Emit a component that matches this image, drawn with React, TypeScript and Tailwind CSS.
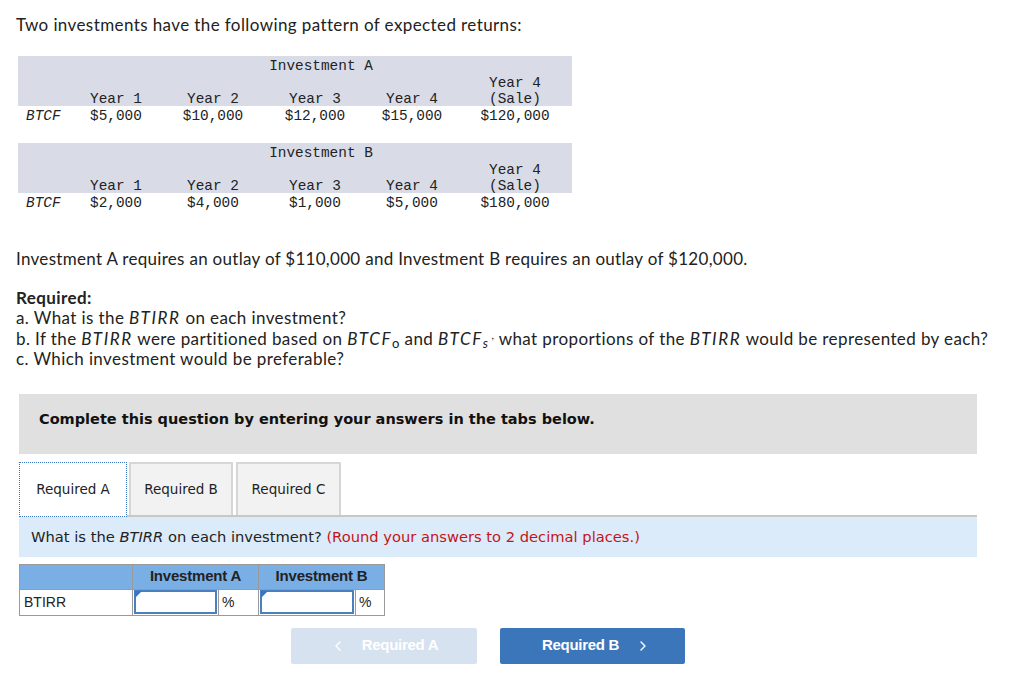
import { ChevronLeft, ChevronRight } from 'lucide-react'

const colW = ['w-[52px]', 'w-[92px]', 'w-[102px]', 'w-[102px]', 'w-[92px]', 'w-[114px]']

interface FlowTableProps {
  title: string
  values: string[]
}

function FlowTable({ title, values }: FlowTableProps) {
  const years = ['Year 1', 'Year 2', 'Year 3', 'Year 4']

  return (
    <div className="w-[554px] font-['Liberation_Mono',monospace] text-[14.4px] leading-[16.5px] text-[#222]">
      <div className="h-[50px] pt-[2px] bg-[#d9dce7]">
        <div className="flex">
          <div className={colW[0]} />
          <div className="flex-1 text-center">{title}</div>
        </div>
        <div className="flex">
          <div className="flex-1" />
          <div className={`${colW[5]} text-center`}>Year 4</div>
        </div>
        <div className="flex">
          <div className={colW[0]} />
          {years.map((y, i) => (
            <div key={y} className={`${colW[i + 1]} text-center`}>
              {y}
            </div>
          ))}
          <div className={`${colW[5]} text-center`}>(Sale)</div>
        </div>
      </div>
      <div className="flex h-[18px] pt-[2px]">
        <div className={`${colW[0]} pl-2 italic`}>BTCF</div>
        {values.map((v, i) => (
          <div key={i} className={`${colW[i + 1]} text-center`}>
            {v}
          </div>
        ))}
      </div>
    </div>
  )
}

function Em({ children }: { children: React.ReactNode }) {
  return <i className="tracking-[1.6px]">{children}</i>
}

export default function App() {
  return (
    <main className="w-[1024px] h-[677px] bg-white pl-4 pt-[13px] font-['Lato',sans-serif] text-[17px] tracking-[0.4px] text-[#222]">
      <p className="leading-6">
        Two investments have the following pattern of expected returns:
      </p>

      <div className="mt-[19px] ml-[2px] flex flex-col gap-[19px] tracking-normal">
        <FlowTable
          title="Investment A"
          values={['$5,000', '$10,000', '$12,000', '$15,000', '$120,000']}
        />
        <FlowTable
          title="Investment B"
          values={['$2,000', '$4,000', '$1,000', '$5,000', '$180,000']}
        />
      </div>

      <p className="mt-[36px] leading-6 tracking-[0.3px]">
        Investment A requires an outlay of $110,000 and Investment B requires an
        outlay of $120,000.
      </p>

      <div className="mt-[17px] leading-[20.4px]">
        <p className="font-bold">Required:</p>
        <p>
          a. What is the <Em>BTIRR</Em> on each investment?
        </p>
        <p>
          b. If the <Em>BTIRR</Em> were partitioned based on <Em>BTCF</Em>
          <sub className="text-[13px]">o</sub> and <Em>BTCF</Em>
          <sub className="text-[13px] italic">s</sub>
          <sup className="text-[11px] ml-[3px]">,</sup> what proportions of the{' '}
          <Em>BTIRR</Em> would be represented by each?
        </p>
        <p>c. Which investment would be preferable?</p>
      </div>

      <div className="mt-[24px] ml-[3px] w-[958px] h-[60px] bg-[#e0e0e0] pl-5 pt-4 font-['DejaVu_Sans',sans-serif] text-[14.5px] font-bold leading-[18px] tracking-normal text-[#111]">
        Complete this question by entering your answers in the tabs below.
      </div>

      <div className="ml-[3px] w-[958px] mt-[8px] font-['DejaVu_Sans',sans-serif] tracking-normal">
        <div className="flex items-end">
          <div className="w-[108px] h-[55px] flex items-center justify-center bg-white border border-dotted border-[#3b74c4] text-[13.5px] text-[#222]">
            Required A
          </div>
          <div className="flex-1 flex items-end gap-[3px] pl-[2px] border-b-2 border-[#c8c8c8]">
            <div className="w-[104px] h-[53px] flex items-center justify-center bg-[#f2f2f2] border-2 border-b-0 border-[#d6d6d6] text-[13.5px] text-[#222]">
              Required B
            </div>
            <div className="w-[105px] h-[53px] flex items-center justify-center bg-[#f2f2f2] border-2 border-b-0 border-[#d6d6d6] text-[13.5px] text-[#222]">
              Required C
            </div>
          </div>
        </div>

        <div className="h-[40px] bg-[#dcebf9] pl-3 flex items-center text-[14.7px] text-[#222]">
          <span>
            What is the <i>BTIRR</i> on each investment?{' '}
            <span className="text-[#c4141a]">
              (Round your answers to 2 decimal places.)
            </span>
          </span>
        </div>

        <table className="mt-[7px] border-collapse font-['Liberation_Sans',sans-serif] text-[14px] text-[#222]">
          <thead>
            <tr className="bg-[#7aafe6] h-[25px]">
              <th className="w-[113px] border border-[#9a9a9a]" />
              <th
                colSpan={2}
                className="w-[126px] border border-[#9a9a9a] font-bold text-[15px] tracking-[-0.2px]"
              >
                Investment A
              </th>
              <th
                colSpan={2}
                className="w-[126px] border border-[#9a9a9a] font-bold text-[15px] tracking-[-0.2px]"
              >
                Investment B
              </th>
            </tr>
          </thead>
          <tbody>
            <tr className="h-[26px]">
              <td className="border border-[#9a9a9a] pl-1 text-left">BTIRR</td>
              <td className="w-[86px] border border-[#9a9a9a] p-0">
                <AnswerInput />
              </td>
              <td className="w-[40px] border border-[#9a9a9a] pl-[3px]">%</td>
              <td className="w-[97px] border border-[#9a9a9a] p-0">
                <AnswerInput />
              </td>
              <td className="w-[29px] border border-[#9a9a9a] pl-[3px]">%</td>
            </tr>
          </tbody>
        </table>

        <div className="mt-[12px] ml-[272px] flex gap-[23px] font-['Liberation_Sans',sans-serif] text-[15px] font-bold tracking-[-0.3px] text-white">
          <div className="w-[186px] h-[36px] rounded-[2px] bg-[#d7e2f0] flex items-center justify-center gap-4">
            <ChevronLeft className="size-4" strokeWidth={2} />
            Required A
          </div>
          <div className="w-[185px] h-[36px] rounded-[2px] bg-[#3b76bb] flex items-center justify-center gap-4 pl-2">
            Required B
            <ChevronRight className="size-4" strokeWidth={2} />
          </div>
        </div>
      </div>
    </main>
  )
}

function AnswerInput() {
  return (
    <div className="relative h-[24px] mx-[1px] border-2 border-[#4a7fc0] bg-white">
      <span className="absolute -left-[1px] -top-[1px] w-0 h-0 border-t-[7px] border-r-[7px] border-t-[#3b74c4] border-r-transparent" />
    </div>
  )
}
